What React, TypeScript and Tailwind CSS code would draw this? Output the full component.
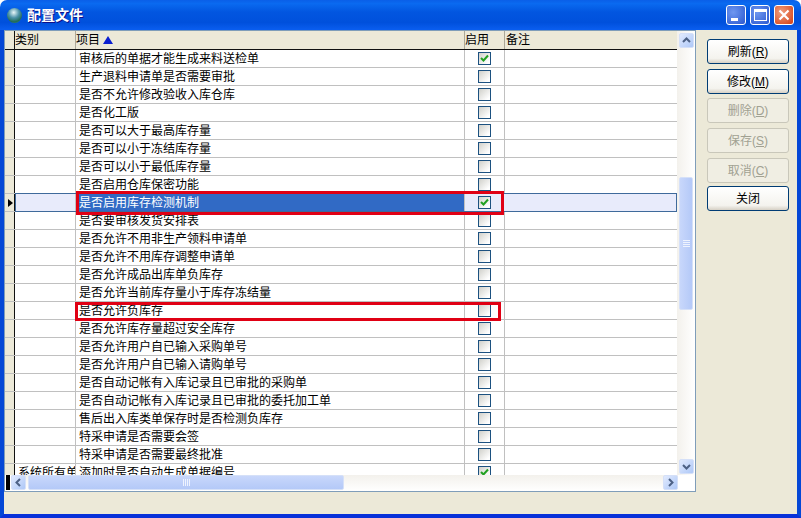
import React from "react";

const ROWS: { label: string; on?: boolean; cat?: string; sel?: boolean }[] = [
  { label: "审核后的单据才能生成来料送检单", on: true },
  { label: "生产退料申请单是否需要审批" },
  { label: "是否不允许修改验收入库仓库" },
  { label: "是否化工版" },
  { label: "是否可以大于最高库存量" },
  { label: "是否可以小于冻结库存量" },
  { label: "是否可以小于最低库存量" },
  { label: "是否启用仓库保密功能" },
  { label: "是否启用库存检测机制", on: true, sel: true },
  { label: "是否要审核发货安排表" },
  { label: "是否允许不用非生产领料申请单" },
  { label: "是否允许不用库存调整申请单" },
  { label: "是否允许成品出库单负库存" },
  { label: "是否允许当前库存量小于库存冻结量" },
  { label: "是否允许负库存" },
  { label: "是否允许库存量超过安全库存" },
  { label: "是否允许用户自已输入采购单号" },
  { label: "是否允许用户自已输入请购单号" },
  { label: "是否自动记帐有入库记录且已审批的采购单" },
  { label: "是否自动记帐有入库记录且已审批的委托加工单" },
  { label: "售后出入库类单保存时是否检测负库存" },
  { label: "特采申请是否需要会签" },
  { label: "特采申请是否需要最终批准" },
  { label: "添加时是否自动生成单据编号", cat: "系统所有单", on: true },
];

function CheckBox({ on }: { on?: boolean }) {
  return (
    <div className="h-[13px] w-[13px] border border-[#1c5180] bg-[linear-gradient(135deg,#d0d0ca,#ffffff_85%)]">
      {on && (
        <svg width="11" height="11" viewBox="0 0 11 11">
          <path d="M2 5 L4.5 7.5 L9 2.5" fill="none" stroke="#21a121" strokeWidth="2" />
        </svg>
      )}
    </div>
  );
}

function Row({ label, on, cat, sel }: { label: string; on?: boolean; cat?: string; sel?: boolean }) {
  return (
    <div className="flex h-[18px] shrink-0 border-b border-[#c0c0c0] bg-white">
      <div className="flex w-[10px] shrink-0 items-center justify-center border-r border-[#111] bg-[#ece9d8]">
        {sel && <div className="ml-[1px] h-0 w-0 border-y-[4px] border-l-[5px] border-y-transparent border-l-black" />}
      </div>
      {sel ? (
        <div className="-mt-px mb-[-1px] flex h-[19px] w-[662px] shrink-0 border border-[#3f6a9b] bg-[#e8ebfb]">
          <div className="w-[60px] shrink-0 border-r border-[#c0c0c0]" />
          <div className="flex w-[388px] shrink-0 items-center bg-[#316ac5] pl-[3px] text-white">{label}</div>
          <div className="flex w-[40px] shrink-0 items-center justify-center border-x border-[#c0c0c0] pl-px">
            <CheckBox on={on} />
          </div>
        </div>
      ) : (
        <>
          <div className="flex w-[61px] shrink-0 items-center overflow-hidden whitespace-nowrap border-r border-[#c0c0c0] pl-[3px]">
            {cat}
          </div>
          <div className="flex w-[389px] shrink-0 items-center border-r border-[#c0c0c0] pl-[3px]">{label}</div>
          <div className="flex w-[40px] shrink-0 items-center justify-center border-r border-[#c0c0c0]">
            <CheckBox on={on} />
          </div>
        </>
      )}
    </div>
  );
}

function ScrollBtn({ d }: { d: string }) {
  return (
    <div className="flex h-[15px] w-[15px] shrink-0 items-center justify-center rounded-[2px] border border-[#d5e0f8] bg-[linear-gradient(135deg,#e1eafe,#aec8f7)]">
      <svg width="9" height="9" viewBox="0 0 9 9">
        <path d={d} fill="none" stroke="#4d6185" strokeWidth="2" />
      </svg>
    </div>
  );
}

function SideBtn({ mt, label, k, off }: { mt: string; label: string; k: string; off?: boolean }) {
  return (
    <button
      className={
        mt +
        " h-[25px] w-[82px] rounded-[3px] border text-[12px] " +
        (off
          ? "border-[#c9c7ba] bg-[#f0eee3] text-[#a1a192]"
          : "border-[#003c74] bg-[linear-gradient(#ffffff,#f4f3ee_80%,#d6d0c5)] text-black")
      }
    >
      {label}(<u>{k}</u>)
    </button>
  );
}

function HeaderCell({ w, children }: { w: string; children: React.ReactNode }) {
  return <div className={w + " flex shrink-0 items-center border-l border-[#aca899] pb-[1px]"}>{children}</div>;
}

export default function App() {
  return (
    <div className="relative flex h-[518px] w-[801px] flex-col overflow-hidden bg-white font-['Liberation_Sans','Noto_Sans_CJK_SC',sans-serif] text-[12px] leading-none text-black">
      {/* title bar */}
      <div className="flex h-[30px] shrink-0 items-center rounded-t-[7px] bg-[linear-gradient(#0a5fe8,#0a6af0_12%,#0256e0_40%,#0050dc_75%,#0a5ef0)] pl-[7px] pr-[7px]">
        <div className="mt-[1px] h-[15px] w-[15px] rounded-full bg-[radial-gradient(circle_at_45%_30%,#e8f6f8,#4d93a8_40%,#1f6a58_70%,#58a868)]" />
        <div className="ml-[5px] text-[14px] font-bold tracking-[0px] text-white [text-shadow:1px_1px_#0f1089]">配置文件</div>
        <div className="ml-auto flex gap-[4px]">
          <div className="flex h-[20px] w-[20px] items-end rounded-[3px] border border-white bg-[radial-gradient(circle_at_35%_35%,#6f97f0,#2a58d0)] pb-[3px] pl-[4px]">
            <div className="h-[3px] w-[7px] bg-white" />
          </div>
          <div className="flex h-[20px] w-[20px] items-center justify-center rounded-[3px] border border-white bg-[radial-gradient(circle_at_35%_35%,#6f97f0,#2a58d0)]">
            <div className="h-[12px] w-[13px] border border-t-[3px] border-white" />
          </div>
          <div className="flex h-[20px] w-[20px] items-center justify-center rounded-[3px] border border-white bg-[radial-gradient(circle_at_35%_35%,#f0a080,#d43c10)]">
            <svg width="12" height="12" viewBox="0 0 12 12">
              <path d="M1.5 1.5 L10.5 10.5 M10.5 1.5 L1.5 10.5" stroke="#fff" strokeWidth="2.2" />
            </svg>
          </div>
        </div>
      </div>

      {/* client area */}
      <div className="flex min-h-0 flex-1 border-x-[4px] border-b-[4px] border-x-[#0447d6] border-b-[#0831d9] bg-[#ece9d8]">
        <div className="flex h-[462px] w-[692px] shrink-0 flex-col border border-[#7f9db9] bg-white">
          <div className="flex min-h-0 flex-1">
            {/* table */}
            <div className="flex w-[672px] shrink-0 flex-col overflow-hidden">
              <div className="flex h-[19px] shrink-0 border-b border-[#111] bg-[#ece9d8]">
                <div className="w-[9px] shrink-0" />
                <div className="flex w-[61px] shrink-0 items-center border-l border-[#111] pb-[1px]">类别</div>
                <HeaderCell w="w-[389px]">
                  项目
                  <div className="ml-[3px] h-0 w-0 border-x-[5px] border-b-[8px] border-x-transparent border-b-[#0a1fd0]" />
                </HeaderCell>
                <HeaderCell w="w-[40px]">启用</HeaderCell>
                <HeaderCell w="w-[172px] pl-px">备注</HeaderCell>
              </div>
              {ROWS.map((r) => (
                <Row key={r.label} {...r} />
              ))}
            </div>
            {/* vertical scrollbar */}
            <div className="flex w-[18px] shrink-0 flex-col bg-[linear-gradient(90deg,#f3f1ec,#ffffff)] pl-[2px] pt-[2px]">
              <ScrollBtn d="M1 6 L4.5 2.5 L8 6" />
              <div className="mt-[129px] flex h-[133px] w-[14px] shrink-0 items-center justify-center rounded-[2px] border border-[#d5e0f8] bg-[linear-gradient(90deg,#c8d7fb,#b4c9f8)]">
                <div className="flex w-[7px] flex-col gap-px">
                  <div className="h-px bg-[#eef3fe]" />
                  <div className="h-px bg-[#eef3fe]" />
                  <div className="h-px bg-[#eef3fe]" />
                  <div className="h-px bg-[#eef3fe]" />
                </div>
              </div>
              <div className="mt-auto mb-[1px]">
                <ScrollBtn d="M1 3 L4.5 6.5 L8 3" />
              </div>
            </div>
          </div>
          {/* horizontal scrollbar */}
          <div className="flex h-[16px] shrink-0 bg-white">
            <div className="ml-px h-[15px] w-[4px] shrink-0 bg-black" />
            <div className="ml-px flex w-[667px] shrink-0 bg-[linear-gradient(#f3f1ec,#ffffff)]">
              <ScrollBtn d="M6 1 L2.5 4.5 L6 8" />
              <div className="ml-[2px] flex h-[15px] w-[316px] items-center justify-center rounded-[2px] border border-[#d5e0f8] bg-[linear-gradient(#c8d7fb,#b4c9f8)]">
                <div className="flex h-[7px] gap-px">
                  <div className="w-px bg-[#eef3fe]" />
                  <div className="w-px bg-[#eef3fe]" />
                  <div className="w-px bg-[#eef3fe]" />
                  <div className="w-px bg-[#eef3fe]" />
                </div>
              </div>
              <div className="ml-auto">
                <ScrollBtn d="M3 1 L6.5 4.5 L3 8" />
              </div>
            </div>
          </div>
        </div>

        {/* buttons */}
        <div className="ml-[11px] flex flex-col pt-[9px]">
          <SideBtn mt="mt-0" label="刷新" k="R" />
          <SideBtn mt="mt-[5px]" label="修改" k="M" />
          <SideBtn mt="mt-[4px]" label="删除" k="D" off />
          <SideBtn mt="mt-[5px]" label="保存" k="S" off />
          <SideBtn mt="mt-[5px]" label="取消" k="C" off />
          <button className="mt-[3px] h-[25px] w-[82px] rounded-[3px] border border-[#003c74] bg-[linear-gradient(#ffffff,#f4f3ee_80%,#d6d0c5)] text-[12px]">
            关闭
          </button>
        </div>
      </div>

      {/* red annotation boxes */}
      <div className="absolute left-[76px] top-[191px] h-[24px] w-[428px] border-[3px] border-[#e00014]" />
      <div className="absolute left-[75px] top-[302px] h-[19px] w-[426px] border-[3px] border-[#e00014]" />
    </div>
  );
}
